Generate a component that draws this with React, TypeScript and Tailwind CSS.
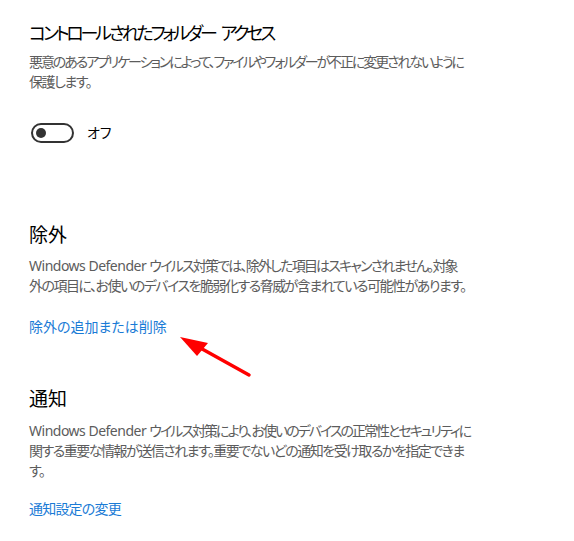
import React from 'react';

const font = { fontFamily: '"Noto Sans", "Noto Sans CJK JP", sans-serif' };

type Line = { c: React.ReactNode; t?: string };

function Desc({ lines, className = '' }: { lines: Line[]; className?: string }) {
  return (
    <p className={`text-[14px] leading-[20px] text-[#5c5c5c] [font-feature-settings:'palt'] ${className}`}>
      {lines.map((l, i) => (
        <span key={i} className={`block whitespace-nowrap ${l.t ?? 'tracking-[-1.5px]'}`}>
          {l.c}
        </span>
      ))}
    </p>
  );
}

function Latin({ children }: { children: React.ReactNode }) {
  return <span className="tracking-[-0.5px]">{children}</span>;
}

function Heading({ children, className = '' }: { children: React.ReactNode; className?: string }) {
  return (
    <h2 className={`text-[18px] leading-[28px] text-black [font-feature-settings:'palt'] ${className}`}>
      {children}
    </h2>
  );
}

export default function App() {
  return (
    <div className="relative h-[541px] w-[574px] overflow-hidden bg-white pl-[29px] pt-[19px]" style={font}>
      <Heading className="tracking-[-3.2px]">
        コントロールされたフォルダー<span className="ml-[6px]">アクセス</span>
      </Heading>
      <Desc
        className="mt-[5px]"
        lines={[
          { c: '悪意のあるアプリケーションによって、ファイルやフォルダーが不正に変更されないように', t: 'tracking-[-2.1px]' },
          { c: '保護します。' },
        ]}
      />

      <div className="mt-[30px] flex h-[21px] items-center">
        <div className="ml-[2px] flex h-[20px] w-[43px] items-center rounded-full border-2 border-[#333333] px-[3px]">
          <div className="h-[10px] w-[10px] rounded-full bg-[#333333]" />
        </div>
        <span className="ml-[13px] text-[14px] text-black [font-feature-settings:'palt']">オフ</span>
      </div>

      <Heading className="mt-[78px] text-[19px]">除外</Heading>
      <Desc
        className="mt-[7px]"
        lines={[
          {
            c: (
              <>
                <Latin>Windows Defender </Latin>ウイルス対策では、除外した項目はスキャンされません。対象
              </>
            ),
            t: 'tracking-[-1.8px]',
          },
          { c: '外の項目に、お使いのデバイスを脆弱化する脅威が含まれている可能性があります。' },
        ]}
      />
      <a className="mt-[21px] block w-fit text-[14px] leading-[20px] text-[#1a7bd6] [font-feature-settings:'palt']" href="#">
        除外の追加または削除
      </a>

      <Heading className="mt-[48px] text-[19px]">通知</Heading>
      <Desc
        className="mt-[8px]"
        lines={[
          {
            c: (
              <>
                <Latin>Windows Defender </Latin>ウイルス対策により、お使いのデバイスの正常性とセキュリティに
              </>
            ),
            t: 'tracking-[-2px]',
          },
          { c: '関する重要な情報が送信されます。重要でないどの通知を受け取るかを指定できま' },
          { c: 'す。' },
        ]}
      />
      <a className="mt-[18px] block w-fit text-[14px] leading-[20px] tracking-[-0.8px] text-[#1a7bd6] [font-feature-settings:'palt']" href="#">
        通知設定の変更
      </a>

      <svg className="pointer-events-none absolute left-0 top-0" width="574" height="541">
        <line x1="249" y1="375" x2="195" y2="345" stroke="#ff0000" strokeWidth="3.5" strokeLinecap="round" />
        <polygon points="180,337 208,343 197,356" fill="#ff0000" />
      </svg>
    </div>
  );
}
